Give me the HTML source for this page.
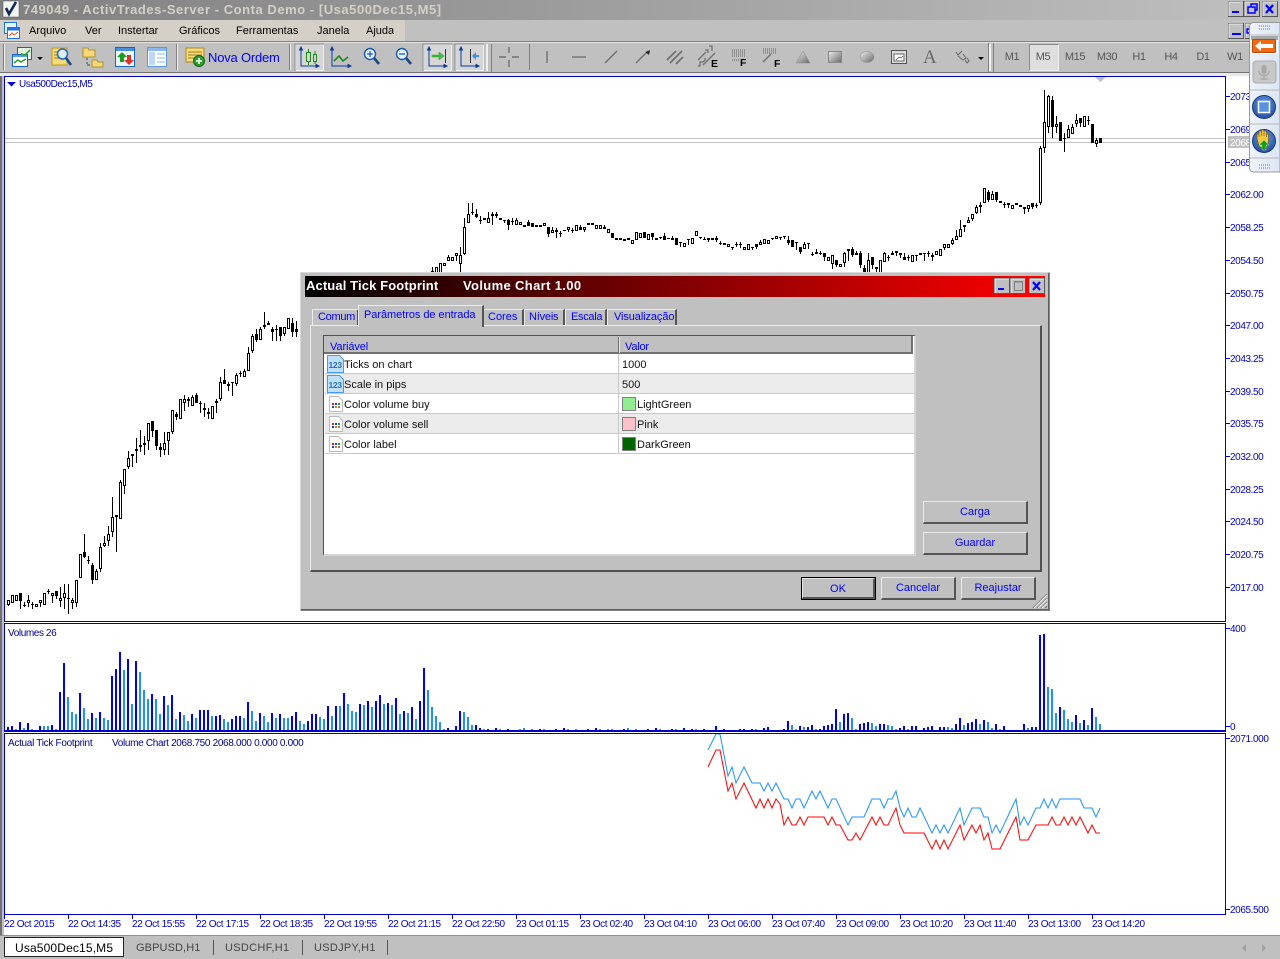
<!DOCTYPE html>
<html lang="pt"><head><meta charset="utf-8"><title>ActivTrades</title>
<style>
html,body{margin:0;padding:0}
body{width:1280px;height:959px;overflow:hidden;position:relative;background:#c0c0c0;font-family:"Liberation Sans",sans-serif;font-size:12px}
.a,.t{position:absolute}
.t{white-space:nowrap;line-height:14px}
.m{color:#000;top:24px;font-size:11px}
.tf{top:50px;color:#555;font-size:11px;letter-spacing:-.4px;width:30px;text-align:center}
.y{left:1230px;margin-top:2px;color:#0000cd;font-size:10px;letter-spacing:-.4px;line-height:12px}
.x{top:919px;color:#0000cd;font-size:10px;letter-spacing:-.38px;line-height:12px}
.c{color:#00008b;font-size:10px;line-height:12px;letter-spacing:-.33px}
.tab{color:#0000ff;font-size:11px}
.tb{position:absolute;top:309px;height:16px;background:#c0c0c0;border-top:1px solid #ececec;border-left:1px solid #ececec;border-right:2px solid #555;box-sizing:border-box}
.btn{position:absolute;box-sizing:border-box;background:#c0c0c0;border-top:1px solid #e8e8e8;border-left:1px solid #e8e8e8;border-right:2px solid #555;border-bottom:2px solid #555;color:#0000ff;text-align:center;font-size:11px;line-height:21px}
.r{position:absolute;left:1px;width:589px;height:20px;box-sizing:border-box;border-bottom:1px solid #c8c8c8}
.n{position:absolute;left:19px;top:4px;color:#111;font-size:11px;line-height:14px;white-space:nowrap}
.v{position:absolute;left:297px;top:4px;color:#111;font-size:11px;line-height:14px;white-space:nowrap}
.s{position:absolute;left:297px;top:3px;width:14px;height:14px;box-sizing:border-box;border:1px solid #808080}
.ic{position:absolute;left:2px;top:1px}
</style></head><body>

<!-- title bar -->
<div class="a" style="left:0;top:0;width:1280px;height:20px;background:linear-gradient(90deg,#808080,#c0c0c0)"></div>
<div class="t" style="left:23px;top:3px;color:#d4d0c8;font-weight:bold;font-size:13px;letter-spacing:.54px">749049 - ActivTrades-Server - Conta Demo - [Usa500Dec15,M5]</div>

<!-- menu -->
<div class="a" style="left:0;top:20px;width:405px;height:21px;background:#d4d0c8"></div>
<div class="a" style="left:0;top:41px;width:1280px;height:1px;background:#808080"></div>
<div class="a" style="left:0;top:42px;width:1280px;height:1px;background:#e4e4e4"></div>
<div class="t m" style="left:29px">Arquivo</div>
<div class="t m" style="left:85px">Ver</div>
<div class="t m" style="left:118px">Instertar</div>
<div class="t m" style="left:179px">Gráficos</div>
<div class="t m" style="left:236px">Ferramentas</div>
<div class="t m" style="left:317px">Janela</div>
<div class="t m" style="left:366px">Ajuda</div>

<!-- toolbar strip -->
<div class="a" style="left:0;top:72px;width:1280px;height:1px;background:#707070"></div>
<div class="a" style="left:0;top:73px;width:1280px;height:3px;background:#e8e8e8"></div>

<div class="t" style="left:208px;top:51px;color:#0000ff;font-size:13px;letter-spacing:-.2px">Nova Ordem</div>
<div class="a" style="left:1029px;top:44px;width:30px;height:27px;box-sizing:border-box;background:#dedede;border:1px solid #f0f0f0;border-top-color:#8a8a8a;border-left-color:#8a8a8a"></div>
<div class="t tf" style="left:997px">M1</div><div class="t tf" style="left:1028px">M5</div><div class="t tf" style="left:1060px">M15</div><div class="t tf" style="left:1092px">M30</div><div class="t tf" style="left:1124px">H1</div><div class="t tf" style="left:1156px">H4</div><div class="t tf" style="left:1188px">D1</div><div class="t tf" style="left:1220px">W1</div>

<!-- chart area -->
<div class="a" style="left:0;top:76px;width:2px;height:860px;background:#707070"></div>
<div class="a" style="left:4px;top:76px;width:1276px;height:859px;background:#fff"></div>
<div class="a" style="left:0;top:935px;width:1280px;height:1px;background:#909090"></div>

<svg id="ch" class="a" style="left:0;top:0" width="1280" height="959" shape-rendering="crispEdges"></svg>

<div class="a" style="left:4px;top:76px;width:1222px;height:546px;box-sizing:border-box;border:1px solid #0000cd;border-right-width:1px"></div>
<div class="a" style="left:4px;top:623px;width:1222px;height:109px;box-sizing:border-box;border:1px solid #0000cd;border-bottom-width:2px"></div>
<div class="a" style="left:4px;top:733px;width:1222px;height:182px;box-sizing:border-box;border:1px solid #0000cd"></div>

<svg class="a" style="left:0;top:0" width="1280" height="959">
 <path d="M7 82h9l-4.500 4.500z" fill="#0000cd"/>
 <path d="M1095 77h11l-5.500 5z" fill="#c0c0c0"/>
 <g fill="#0000cd" shape-rendering="crispEdges">
 <rect x="1226" y="96" width="4" height="1"/><rect x="1226" y="129" width="4" height="1"/><rect x="1226" y="162" width="4" height="1"/><rect x="1226" y="194" width="4" height="1"/><rect x="1226" y="227" width="4" height="1"/><rect x="1226" y="260" width="4" height="1"/><rect x="1226" y="293" width="4" height="1"/><rect x="1226" y="325" width="4" height="1"/><rect x="1226" y="358" width="4" height="1"/><rect x="1226" y="391" width="4" height="1"/><rect x="1226" y="423" width="4" height="1"/><rect x="1226" y="456" width="4" height="1"/><rect x="1226" y="489" width="4" height="1"/><rect x="1226" y="521" width="4" height="1"/><rect x="1226" y="554" width="4" height="1"/><rect x="1226" y="587" width="4" height="1"/>
 <rect x="1226" y="628" width="4" height="1"/><rect x="1226" y="726" width="4" height="1"/><rect x="1226" y="738" width="4" height="1"/><rect x="1226" y="909" width="4" height="1"/>
 <rect x="4" y="915" width="1" height="4"/><rect x="68" y="915" width="1" height="4"/><rect x="132" y="915" width="1" height="4"/><rect x="196" y="915" width="1" height="4"/><rect x="260" y="915" width="1" height="4"/><rect x="324" y="915" width="1" height="4"/><rect x="388" y="915" width="1" height="4"/><rect x="452" y="915" width="1" height="4"/><rect x="516" y="915" width="1" height="4"/><rect x="580" y="915" width="1" height="4"/><rect x="644" y="915" width="1" height="4"/><rect x="708" y="915" width="1" height="4"/><rect x="772" y="915" width="1" height="4"/><rect x="836" y="915" width="1" height="4"/><rect x="900" y="915" width="1" height="4"/><rect x="964" y="915" width="1" height="4"/><rect x="1028" y="915" width="1" height="4"/><rect x="1092" y="915" width="1" height="4"/>
 </g>
</svg>

<div class="t" style="left:19px;top:79px;color:#0000cd;font-size:10px;line-height:12px;letter-spacing:-.48px">Usa500Dec15,M5</div>
<div class="t c" style="left:8px;top:628px;letter-spacing:-.4px">Volumes 26</div>
<div class="t c" style="left:8px;top:738px;letter-spacing:-.3px">Actual Tick Footprint</div>
<div class="t c" style="left:112px;top:738px">Volume Chart 2068.750 2068.000 0.000 0.000</div>

<div class="t y" style="top:90px">2073.25</div><div class="t y" style="top:123px">2069.50</div>
<div class="a" style="left:1228px;top:136px;width:40px;height:12px;background:#c0c0c0"></div>
<div class="t y" style="top:136px;color:#fff">2068.75</div>
<div class="t y" style="top:156px">2065.75</div><div class="t y" style="top:188px">2062.00</div><div class="t y" style="top:221px">2058.25</div><div class="t y" style="top:254px">2054.50</div><div class="t y" style="top:287px">2050.75</div><div class="t y" style="top:319px">2047.00</div><div class="t y" style="top:352px">2043.25</div><div class="t y" style="top:385px">2039.50</div><div class="t y" style="top:417px">2035.75</div><div class="t y" style="top:450px">2032.00</div><div class="t y" style="top:483px">2028.25</div><div class="t y" style="top:515px">2024.50</div><div class="t y" style="top:548px">2020.75</div><div class="t y" style="top:581px">2017.00</div>
<div class="t y" style="top:622px">400</div><div class="t y" style="top:720px">0</div><div class="t y" style="top:732px">2071.000</div><div class="t y" style="top:903px">2065.500</div>

<div class="t x" style="left:4px">22 Oct 2015</div><div class="t x" style="left:68px">22 Oct 14:35</div><div class="t x" style="left:132px">22 Oct 15:55</div><div class="t x" style="left:196px">22 Oct 17:15</div><div class="t x" style="left:260px">22 Oct 18:35</div><div class="t x" style="left:324px">22 Oct 19:55</div><div class="t x" style="left:388px">22 Oct 21:15</div><div class="t x" style="left:452px">22 Oct 22:50</div><div class="t x" style="left:516px">23 Oct 01:15</div><div class="t x" style="left:580px">23 Oct 02:40</div><div class="t x" style="left:644px">23 Oct 04:10</div><div class="t x" style="left:708px">23 Oct 06:00</div><div class="t x" style="left:772px">23 Oct 07:40</div><div class="t x" style="left:836px">23 Oct 09:00</div><div class="t x" style="left:900px">23 Oct 10:20</div><div class="t x" style="left:964px">23 Oct 11:40</div><div class="t x" style="left:1028px">23 Oct 13:00</div><div class="t x" style="left:1092px">23 Oct 14:20</div>

<!-- tab bar -->
<div class="a" style="left:4px;top:937px;width:120px;height:20px;box-sizing:border-box;background:#fff;border:1px solid #222"></div>
<div class="t" style="left:15px;top:941px;color:#000;font-size:12px;letter-spacing:.15px">Usa500Dec15,M5</div>
<div class="t" style="left:136px;top:941px;color:#444;font-size:11px;letter-spacing:.1px">GBPUSD,H1</div>
<div class="t" style="left:225px;top:941px;color:#444;font-size:11px;letter-spacing:.3px">USDCHF,H1</div>
<div class="t" style="left:314px;top:941px;color:#444;font-size:11px;letter-spacing:.3px">USDJPY,H1</div>
<div class="a" style="left:213px;top:940px;width:1px;height:15px;background:#555"></div>
<div class="a" style="left:302px;top:940px;width:1px;height:15px;background:#555"></div>
<div class="a" style="left:387px;top:940px;width:1px;height:15px;background:#555"></div>

<!-- toolbar icons -->
<svg class="a" style="left:0;top:0" width="1280" height="80">
 <!-- logo + menu icon -->
 <rect x="3" y="1" width="16" height="16" fill="#f4f4f4" stroke="#555" stroke-width=".5"/>
 <path d="M6 8l3 6 7-12" fill="none" stroke="#0d2a55" stroke-width="2.600"/>
 <rect x="4.500" y="22.500" width="12" height="11" fill="#e8f2ff" stroke="#1e74d8"/>
 <rect x="7.500" y="27.500" width="12" height="11" fill="#fff" stroke="#1e74d8"/>
 <rect x="8" y="28" width="11" height="2.500" fill="#1e74d8"/>
 <path d="M9 36l3-3 2 2 4-3" fill="none" stroke="#e05020"/>
 <!-- separators -->
 <g fill="#808080"><rect x="3" y="44" width="1" height="26"/><rect x="176" y="44" width="1" height="26"/><rect x="289" y="44" width="1" height="26"/><rect x="529" y="44" width="1" height="26"/></g>
 <g fill="#f0f0f0"><rect x="4" y="44" width="1" height="26"/><rect x="177" y="44" width="1" height="26"/><rect x="290" y="44" width="1" height="26"/><rect x="486" y="44" width="2" height="27"/><rect x="989" y="44" width="2" height="27"/></g>
 <g fill="#808080"><rect x="491" y="44" width="1" height="28"/><rect x="988" y="43" width="1" height="29"/><rect x="993" y="43" width="1" height="29"/></g>
 <!-- new chart -->
 <rect x="17.500" y="47.500" width="14" height="12" fill="#e4f2e4" stroke="#1565c0"/>
 <rect x="12.500" y="54.500" width="15" height="12" fill="#fff" stroke="#1565c0"/>
 <rect x="13" y="55" width="14" height="2" fill="#5aa0e0"/>
 <path d="M14 63l4-3 3 2 5-3M21 54l4 1 5-5" fill="none" stroke="#2a9a2a" stroke-width="1.500"/>
 <path d="M37 57h6l-3 3z" fill="#000"/>
 <!-- find -->
 <rect x="52" y="48" width="15" height="17" fill="#f6dc78" stroke="#c09820"/>
 <path d="M54 52h10M54 55h6M54 58h6" stroke="#a08020"/>
 <circle cx="62.500" cy="54" r="5" fill="#dcecff" stroke="#2a6ab8" stroke-width="1.600"/>
 <path d="M66 58l5 7" stroke="#1a4a90" stroke-width="2.600"/>
 <!-- folders -->
 <path d="M83 48h5l1 2h6v7H83z" fill="#f5d878" stroke="#b09030"/>
 <path d="M92 60h5l1 2h5v5H92z" fill="#f5d878" stroke="#b09030"/>
 <path d="M87 58v2M87 62v2M87 65h3" stroke="#444" fill="none"/>
 <!-- market -->
 <rect x="115.500" y="47.500" width="19" height="19" fill="#eef6ff" stroke="#1565c0"/>
 <rect x="116" y="48" width="18" height="3" fill="#4a90d8"/>
 <path d="M122 52l-5 5h3v5h4v-5h3z" fill="#18a018"/>
 <path d="M129 65l5-5h-3v-5h-4v5h-3z" fill="#e03020"/>
 <!-- layout -->
 <rect x="147.500" y="47.500" width="19" height="19" fill="#fff" stroke="#5a98d8"/>
 <rect x="148" y="48" width="18" height="3" fill="#8ab8e8"/>
 <rect x="149" y="52" width="6" height="13" fill="#bcd8f4"/>
 <path d="M157 54h8M157 58h8M157 62h8" stroke="#90b8e0"/>
 <!-- nova ordem -->
 <rect x="186" y="48" width="18" height="14" fill="#f6dc78" stroke="#a88820"/>
 <path d="M188 52h14M188 55h14M188 58h10" stroke="#a08020"/>
 <circle cx="199" cy="61" r="5.500" fill="#2aa02a" stroke="#186018"/>
 <path d="M196 61h6M199 58v6" stroke="#fff" stroke-width="1.600"/>
 <!-- pressed btns -->
 <rect x="295.500" y="44.500" width="28" height="26" fill="#d6d6d6" stroke="#f0f0f0"/>
 <path d="M295 71V44h29" fill="none" stroke="#8a8a8a"/>
 <rect x="423.500" y="44.500" width="28" height="26" fill="#d6d6d6" stroke="#f0f0f0"/>
 <path d="M423 71V44h29" fill="none" stroke="#8a8a8a"/>
 <rect x="455.500" y="44.500" width="28" height="26" fill="#d6d6d6" stroke="#f0f0f0"/>
 <path d="M455 71V44h29" fill="none" stroke="#8a8a8a"/>
 <!-- axes -->
 <g fill="none" stroke="#0a3aa0">
  <path d="M301 48v18h17"/><path d="M299.500 50l1.500-3 1.500 3zM316 64.500l3 1.500-3 1.500z" fill="#0a3aa0"/>
  <path d="M332 48v18h18"/><path d="M330.500 50l1.500-3 1.500 3zM348 64.500l3 1.500-3 1.500z" fill="#0a3aa0"/>
  <path d="M429 48v18h18"/><path d="M427.500 50l1.500-3 1.500 3zM444 64.500l3 1.500-3 1.500z" fill="#0a3aa0"/>
  <path d="M461 48v18h18"/><path d="M459.500 50l1.500-3 1.500 3zM476 64.500l3 1.500-3 1.500z" fill="#0a3aa0"/>
 </g>
 <rect x="306.500" y="52.500" width="4" height="9" fill="#d6d6d6" stroke="#1a8a1a"/><path d="M308.500 49v3M308.500 62v3" stroke="#1a8a1a"/>
 <rect x="313.500" y="54.500" width="3" height="7" fill="#d6d6d6" stroke="#1a8a1a"/><path d="M315 51v3M315 62v2" stroke="#1a8a1a"/>
 <path d="M334 61l5-5 4 5 5-4" fill="none" stroke="#1a8a1a" stroke-width="1.600"/>
 <path d="M432 55h7v-3l5 4-5 4v-3h-7z" fill="#40c040" stroke="#2a9a2a" stroke-width=".5"/><path d="M445.500 49v14" stroke="#333"/>
 <path d="M470.500 49v14" stroke="#333"/><path d="M479 55h-3v-3l-4 4 4 4v-3h3z" fill="#4a8ae8"/>
 <!-- zoom in/out -->
 <circle cx="370" cy="54" r="5.500" fill="#e8f2ff" stroke="#1a5ab0" stroke-width="1.400"/><path d="M367 54h6M370 51v6" stroke="#1a5ab0" stroke-width="1.300"/><path d="M374 58l5 6" stroke="#1a4a80" stroke-width="2.600"/>
 <circle cx="402" cy="54" r="5.500" fill="#e8f2ff" stroke="#1a5ab0" stroke-width="1.400"/><path d="M399 54h6" stroke="#1a5ab0" stroke-width="1.300"/><path d="M406 58l5 6" stroke="#1a4a80" stroke-width="2.600"/>
 <!-- drawing tools -->
 <g fill="none" stroke="#707070" stroke-width="1.400">
  <path d="M499 57h7M512 57h7M509 47v6M509 60v7"/>
  <path d="M547 51v12"/><path d="M572 57h14"/>
  <path d="M605 63l12-12"/>
  <path d="M636 63l12-12"/>
  <path d="M667 60l9-9M670 63l12-12M676 64l7-7" stroke-width="1.800"/>
  <path d="M698 66h2v-4h3l2-2v-2M705 50h3v3M709 46h3v5M698 60l8-8M703 65l12-12" stroke-width="1.300"/>
  <path d="M763 62l8-8" />
 </g>
 <path d="M646 52l4-2-1 5-1-1-2-1z" fill="#222"/>
 <path d="M732 50h14M732 52h14M732 54h14M732 56h14M732 60h8" stroke="#606060" stroke-dasharray="1 1"/>
 <path d="M763 49h13M763 51h13M763 53h13" stroke="#606060" stroke-dasharray="1 1"/>
 <text x="711" y="67" font-family="Liberation Sans,sans-serif" font-weight="bold" font-size="10.500" fill="#000">E</text>
 <text x="740" y="66" font-family="Liberation Sans,sans-serif" font-weight="bold" font-size="10.500" fill="#000">F</text>
 <text x="774" y="67" font-family="Liberation Sans,sans-serif" font-weight="bold" font-size="10.500" fill="#000">F</text>
 <defs>
  <linearGradient id="gg" x1="0" y1="0" x2="1" y2="1"><stop offset="0" stop-color="#ececec"/><stop offset="1" stop-color="#6a6a6a"/></linearGradient>
 </defs>
 <path d="M803 51l7 12h-14z" fill="url(#gg)" stroke="#888" stroke-width=".5"/>
 <rect x="828.500" y="51.500" width="13" height="11" fill="url(#gg)" stroke="#888"/>
 <ellipse cx="867" cy="57" rx="7" ry="5.500" fill="url(#gg)" stroke="#888" stroke-width=".5"/>
 <rect x="891.500" y="50.500" width="15" height="13" fill="#ddd" stroke="#555"/><rect x="894" y="54" width="10" height="7" fill="#fff" stroke="#666"/><path d="M896 60l3-3 2 1 2-2" fill="none" stroke="#444" stroke-width=".7"/>
 <text x="923" y="63" font-family="Liberation Serif,serif" font-size="19" fill="#666">A</text>
 <path d="M956 52l2 3 4-4M958 56l5 4 3-2-3-4M965 60l2 3 2-2-2-3" fill="none" stroke="#666"/>
 <path d="M978 57h6l-3 3z" fill="#000"/>
 <!-- window buttons -->
 <g fill="#c0c0c0" stroke="#555"><rect x="1228.500" y="1.500" width="15" height="15"/><rect x="1244.500" y="1.500" width="15" height="15"/><rect x="1262.500" y="1.500" width="15" height="15"/><rect x="1228.500" y="23.500" width="15" height="15"/><rect x="1245.500" y="23.500" width="15" height="15"/></g>
 <g stroke="#eee" fill="none"><path d="M1229 16V2h14M1245 16V2h14M1263 16V2h14M1229 38V24h14M1246 38V24h14"/></g>
 <g fill="#0000ff"><rect x="1232" y="11" width="7" height="2"/><rect x="1232" y="33" width="9" height="2"/></g>
 <path d="M1251 7V4h6v6h-2M1248 7h7v6h-7z" fill="none" stroke="#0000ff" stroke-width="1.500"/>
 <path d="M1266 5l7 8M1273 5l-7 8" stroke="#0000ff" stroke-width="2.200"/>
 <path d="M1247 29h3v4h-3z" fill="none" stroke="#0000ff" stroke-width="1.500"/>
</svg>

<!-- dialog -->
<div class="a" style="left:300px;top:272px;width:750px;height:339px;box-sizing:border-box;background:#c0c0c0;border:1px solid #808080;border-top-color:#d8d8d8;border-left-color:#d8d8d8;box-shadow:inset -1px -1px 0 #606060">
 <div class="a" style="left:4px;top:3px;width:740px;height:21px;background:linear-gradient(90deg,#000,#ff0000)"></div>
</div>
<div class="t" style="left:306px;top:279px;color:#fff;font-weight:bold;font-size:13px;letter-spacing:.12px">Actual Tick Footprint</div>
<div class="t" style="left:463px;top:279px;color:#fff;font-weight:bold;font-size:13px;letter-spacing:.35px">Volume Chart 1.00</div>
<svg class="a" style="left:990px;top:276px" width="60" height="21">
 <g fill="#c0c0c0" stroke="#555"><rect x="4.500" y="2.500" width="15" height="15"/><rect x="20.500" y="2.500" width="15" height="15"/><rect x="39.500" y="2.500" width="15" height="15"/></g>
 <path d="M5 17V3h14M21 17V3h14M40 17V3h14" fill="none" stroke="#eee"/>
 <rect x="8" y="12" width="6" height="2" fill="#0000ff"/>
 <rect x="24.500" y="5.500" width="8" height="9" fill="none" stroke="#808080"/><path d="M24 6h9" stroke="#808080"/>
 <path d="M43 6l7 8M50 6l-7 8" stroke="#0000ff" stroke-width="2.200"/>
</svg>

<!-- panel -->
<div class="a" style="left:310px;top:325px;width:732px;height:247px;box-sizing:border-box;border-top:1px solid #ececec;border-left:1px solid #ececec;border-right:2px solid #505050;border-bottom:2px solid #505050"></div>
<!-- tabs -->
<div class="tb" style="left:312px;width:47px"></div>
<div class="tb" style="left:483px;width:41px"></div>
<div class="tb" style="left:524px;width:41px"></div>
<div class="tb" style="left:565px;width:42px"></div>
<div class="tb" style="left:607px;width:70px"></div>
<div class="tb" style="left:358px;top:305px;width:126px;height:22px;border-bottom:0"></div>
<div class="t tab" style="left:318px;top:310px;letter-spacing:-.3px">Comum</div>
<div class="t tab" style="left:364px;top:308px;letter-spacing:-.05px">Parâmetros de entrada</div>
<div class="t tab" style="left:488px;top:310px">Cores</div>
<div class="t tab" style="left:529px;top:310px;letter-spacing:-.2px">Níveis</div>
<div class="t tab" style="left:571px;top:310px;letter-spacing:-.3px">Escala</div>
<div class="t tab" style="left:614px;top:310px;letter-spacing:-.1px">Visualização</div>

<!-- list -->
<div class="a" style="left:323px;top:335px;width:593px;height:221px;box-sizing:border-box;background:#fff;border-top:1px solid #505050;border-left:1px solid #505050;border-right:2px solid #d4d4d4;border-bottom:2px solid #d4d4d4;overflow:hidden">
 <div class="a" style="left:1px;top:1px;width:590px;height:218px">
 <div class="a" style="left:-1px;top:-1px;width:589px;height:18px;box-sizing:border-box;background:#c0c0c0;border-right:2px solid #707070;border-bottom:2px solid #707070"></div>
 <div class="a" style="left:293px;top:0;width:2px;height:16px;background:linear-gradient(90deg,#707070 50%,#e8e8e8 50%)"></div>
 <div class="t tab" style="left:5px;top:3px;letter-spacing:-.1px">Variável</div>
 <div class="t tab" style="left:300px;top:3px;letter-spacing:-.2px">Valor</div>

 <div class="r" style="top:17px;left:0"><svg class="ic" width="17" height="19"><path d="M.5.500h12l4 4v13H.5z" fill="#bfe0fb" stroke="#4a9ae0"/><text x="1.500" y="13" font-family="Liberation Sans,sans-serif" font-size="8.500" font-weight="bold" fill="#2a70c0" letter-spacing="-.3">123</text></svg><div class="n">Ticks on chart</div><div class="v">1000</div></div>
 <div class="r" style="top:37px;left:0;background:#ebebeb"><svg class="ic" width="17" height="19"><path d="M.5.500h12l4 4v13H.5z" fill="#bfe0fb" stroke="#4a9ae0"/><text x="1.500" y="13" font-family="Liberation Sans,sans-serif" font-size="8.500" font-weight="bold" fill="#2a70c0" letter-spacing="-.3">123</text></svg><div class="n">Scale in pips</div><div class="v">500</div></div>
 <div class="r" style="top:57px;left:0"><svg class="ic" width="17" height="19"><path d="M2.500 1.500h9l4 4v11h-13z" fill="#fff" stroke="#bbb"/><path d="M5 8h2v2H5z" fill="#d02020"/><path d="M8 8h2v2H8z" fill="#2040d0"/><path d="M11 8h2v2h-2z" fill="#20a020"/><path d="M5 11h2v2H5z" fill="#2040d0"/><path d="M8 11h2v2H8z" fill="#e08020"/><path d="M11 11h2v2h-2z" fill="#808080"/></svg><div class="n">Color volume buy</div><div class="s" style="background:#90ee90"></div><div class="v" style="left:312px">LightGreen</div></div>
 <div class="r" style="top:77px;left:0;background:#ebebeb"><svg class="ic" width="17" height="19"><path d="M2.500 1.500h9l4 4v11h-13z" fill="#fff" stroke="#bbb"/><path d="M5 8h2v2H5z" fill="#d02020"/><path d="M8 8h2v2H8z" fill="#2040d0"/><path d="M11 8h2v2h-2z" fill="#20a020"/><path d="M5 11h2v2H5z" fill="#2040d0"/><path d="M8 11h2v2H8z" fill="#e08020"/><path d="M11 11h2v2h-2z" fill="#808080"/></svg><div class="n">Color volume sell</div><div class="s" style="background:#ffc0cb"></div><div class="v" style="left:312px">Pink</div></div>
 <div class="r" style="top:97px;left:0"><svg class="ic" width="17" height="19"><path d="M2.500 1.500h9l4 4v11h-13z" fill="#fff" stroke="#bbb"/><path d="M5 8h2v2H5z" fill="#d02020"/><path d="M8 8h2v2H8z" fill="#2040d0"/><path d="M11 8h2v2h-2z" fill="#20a020"/><path d="M5 11h2v2H5z" fill="#2040d0"/><path d="M8 11h2v2H8z" fill="#e08020"/><path d="M11 11h2v2h-2z" fill="#808080"/></svg><div class="n">Color label</div><div class="s" style="background:#006400"></div><div class="v" style="left:312px">DarkGreen</div></div>
 <div class="a" style="left:293px;top:17px;width:1px;height:100px;background:#c8c8c8"></div>
 </div>
</div>

<div class="btn" style="left:923px;top:501px;width:105px;height:23px">Carga</div>
<div class="btn" style="left:923px;top:532px;width:105px;height:23px">Guardar</div>
<div class="a" style="left:801px;top:577px;width:75px;height:23px;box-sizing:border-box;border:1px solid #000"></div>
<div class="btn" style="left:802px;top:578px;width:73px;height:21px;line-height:20px">OK</div>
<div class="btn" style="left:881px;top:577px;width:75px;height:23px">Cancelar</div>
<div class="btn" style="left:961px;top:577px;width:75px;height:23px">Reajustar</div>
<svg class="a" style="left:1032px;top:593px" width="16" height="16"><path d="M1 15L15 1M5 15L15 5M9 15l6-6M13 15l2-2" stroke="#707070" fill="none"/><path d="M2 15L15 2M6 15l9-9M10 15l5-5" stroke="#f0f0f0" fill="none"/></svg>

<!-- side toolbar -->
<svg class="a" style="left:1249px;top:22px" width="31" height="151">
 <defs>
  <linearGradient id="sb" x1="0" y1="0" x2="1" y2="0"><stop offset="0" stop-color="#eef3fb"/><stop offset="1" stop-color="#dbe5f3"/></linearGradient>
  <radialGradient id="bl" cx=".5" cy=".35" r=".7"><stop offset="0" stop-color="#6a9ae0"/><stop offset="1" stop-color="#1f4a9a"/></radialGradient>
 </defs>
 <path d="M4.500.5h26.500v149.500H4.500a4 4 0 0 1-4-4V4.500a4 4 0 0 1 4-4z" fill="url(#sb)" stroke="#9a9a9a"/>
 <path d="M10 4h1M12 4h1M14 4h1M16 4h1M18 4h1M20 4h1M10 7h1M12 7h1M14 7h1M16 7h1M18 7h1M20 7h1" stroke="#777" stroke-width="1"/>
 <path d="M10 143h1M12 143h1M14 143h1M16 143h1M18 143h1M20 143h1M10 146h1M12 146h1M14 146h1M16 146h1M18 146h1M20 146h1" stroke="#777"/>
 <path d="M1 13h30M1 68h30M1 102h30M1 136h30" stroke="#b8b8b8"/>
 <rect x="2" y="14" width="27" height="18" fill="#fff" /><rect x="2" y="14" width="27" height="4" fill="#a8a8a8"/>
 <rect x="3.500" y="17.500" width="23" height="13" rx="1" fill="#ef6a12" stroke="#b84a08"/>
 <path d="M6 24l6-5v3h12v4H12v3z" fill="#fff"/>
 <rect x="4" y="39" width="23" height="22" rx="3" fill="#c8c8c8" stroke="#aaa"/>
 <rect x="12.500" y="43" width="5" height="9" rx="2.500" fill="#a8a8a8"/><path d="M10 49c0 6 10 6 10 0M15 54v3M11 57h8" stroke="#a8a8a8" fill="none" stroke-width="1.300"/>
 <circle cx="15" cy="85" r="11.500" fill="url(#bl)" stroke="#1a3a80"/>
 <rect x="9.500" y="79.500" width="11" height="11" fill="#5a90e0" stroke="#fff" stroke-width="1.500"/>
 <circle cx="15" cy="119" r="11.500" fill="url(#bl)" stroke="#1a3a80"/>
 <path d="M8 117v-5h2v3-6h2.500v5-6h2.500v6-5h2.500v6-3h2v8l-2 5h-7z" fill="#f0c840" stroke="#6a4a10" stroke-width=".6"/>
 <path d="M15 118l5 5h-3v5h-4v-5h-3z" fill="#12a012" stroke="#fff" stroke-width=".3"/>
</svg>
<svg class="a" style="left:1238px;top:942px" width="36" height="12"><path d="M8 2l-4 4 4 4z" fill="#a0a0a0"/><path d="M24 2l4 4-4 4z" fill="#a0a0a0"/></svg>

<script>
(function(){
var D="8 600 605 0 606 0;12 595 603 0 0 0;16 595 601 0 0 0;20 593 601 0 609 1;24 605 605 602 607 0;28 600 603 595 607 0;32 604 604 602 609 0;36 604 607 0 0 0;40 600 603 0 607 0;44 593 605 0 0 0;48 591 591 589 594 0;52 593 596 0 603 0;56 591 596 0 599 1;60 598 601 587 607 0;64 593 598 584 609 0;68 598 598 584 614 0;72 600 603 598 609 0;76 580 603 0 607 0;80 554 578 0 0 0;84 552 557 534 558 1;88 560 560 556 564 0;92 565 580 563 584 1;96 571 580 569 0 0;100 547 569 543 572 0;104 543 546 536 547 0;108 534 541 526 546 0;112 517 532 497 537 0;116 515 517 0 552 1;120 482 519 480 0 0;124 469 486 0 494 0;128 458 467 451 469 0;132 454 456 0 467 0;136 449 451 438 463 0;140 445 447 430 452 0;144 443 445 436 455 0;148 423 441 0 450 0;152 421 431 0 437 1;156 430 446 0 450 1;160 447 450 443 457 1;164 443 450 432 455 0;168 432 441 0 455 0;172 410 432 0 434 0;176 414 417 412 420 1;180 399 419 0 0 0;184 399 403 395 411 0;188 399 401 397 407 1;192 397 406 395 0 0;196 395 403 393 0 1;200 403 403 401 413 0;204 408 410 403 417 1;208 412 414 408 419 1;212 406 419 0 0 0;216 401 403 399 413 0;220 382 399 377 401 0;224 380 384 369 0 1;228 384 386 382 391 0;232 382 382 0 396 0;236 375 384 373 386 0;240 373 373 371 377 0;244 371 377 369 0 0;248 353 371 347 0 0;252 336 351 334 353 0;256 334 340 329 342 1;260 329 340 327 0 0;264 325 327 312 329 0;268 323 325 321 0 1;272 329 332 327 341 1;276 329 329 325 341 0;280 327 336 0 341 1;284 327 334 0 336 0;288 318 329 0 0 0;292 323 332 318 337 1;296 329 332 321 337 1;"+
"432 271 271 267 272 0;436 267 273 0 0 0;440 263 273 0 0 0;444 263 266 0 0 0;448 257 261 255 0 0;452 257 261 0 0 0;456 253 256 0 261 0;460 255 264 247 273 0;464 227 254 218 255 0;468 214 223 203 0 0;472 212 212 203 215 0;476 214 217 209 218 1;480 220 220 216 224 0;484 218 220 0 0 1;488 218 223 212 0 0;492 214 216 212 225 0;496 214 216 212 218 1;500 218 220 0 0 0;504 220 220 0 223 0;508 220 225 219 230 1;512 221 221 218 225 0;516 220 225 218 0 0;520 222 225 0 0 0;524 225 227 0 0 0;528 222 226 220 0 1;532 223 227 0 0 1;536 225 227 0 0 0;540 225 227 0 0 0;544 223 226 0 0 0;548 227 234 0 237 1;552 230 233 227 0 0;556 230 232 228 238 1;560 233 233 231 237 0;564 230 230 0 0 0;568 227 230 0 232 0;572 230 230 228 233 0;576 225 231 0 0 0;580 227 230 225 0 1;584 227 230 0 232 0;588 223 225 0 0 0;592 223 225 0 0 0;596 225 229 0 0 0;600 225 229 0 0 0;604 227 229 225 0 1;608 229 233 0 0 0;612 233 238 0 0 1;616 238 240 0 0 0;620 238 240 0 0 0;624 239 241 0 0 0;628 238 240 0 0 1;632 240 244 0 0 0;636 232 240 0 0 0;640 233 238 0 0 0;644 232 238 0 0 1;648 234 240 0 0 0;652 233 237 0 240 1;656 238 240 0 0 0;660 237 237 0 239 0;664 236 240 233 0 1;668 238 238 0 0 0;672 238 240 236 0 1;676 238 245 0 0 1;680 242 242 0 247 0;684 243 247 0 0 0;688 239 239 0 245 0;692 238 244 0 0 0;696 231 236 0 0 0;700 237 237 0 239 0;704 239 239 237 0 0;708 238 240 0 242 1;712 238 240 0 0 1;716 238 240 236 242 1;720 243 243 241 245 0;724 243 245 0 0 0;728 244 247 0 0 0;732 247 247 0 250 0;736 244 244 242 247 0;740 244 244 242 248 0;744 247 250 0 0 0;748 244 250 0 0 0;752 247 247 0 250 0;756 244 247 0 249 1;760 242 245 240 0 0;764 239 244 0 0 0;768 240 244 0 0 0;772 238 238 0 240 0;776 236 239 0 0 0;780 237 237 0 240 0;784 236 236 0 239 0;788 240 243 236 245 1;792 240 247 0 0 1;796 242 242 0 250 0;800 247 252 0 254 1;804 244 249 242 0 0;808 243 243 0 249 0;812 254 254 252 256 0;816 252 254 249 0 0;820 253 253 251 255 0;824 253 257 0 261 1;828 257 261 0 0 0;832 255 264 0 269 0;836 260 265 0 267 1;840 264 267 0 0 0;844 253 263 252 267 0;848 249 251 0 261 0;852 249 255 247 257 1;856 253 255 251 0 1;860 253 265 251 268 1;864 268 273 265 0 1;868 260 273 253 0 0;872 257 265 0 269 1;876 267 269 0 272 0;880 260 273 0 0 0;884 253 262 252 0 0;888 257 257 255 261 0;892 253 255 251 0 0;896 251 253 0 256 0;900 253 255 0 258 0;904 257 260 253 0 1;908 257 257 255 261 0;912 255 262 0 0 0;916 255 255 0 261 0;920 253 255 0 0 1;924 253 253 0 261 0;928 253 253 251 257 0;932 255 257 253 261 1;936 251 255 0 0 0;940 249 256 0 0 0;944 244 248 0 250 0;948 244 248 0 0 0;952 240 244 238 245 0;956 236 240 230 0 0;960 229 237 220 0 0;964 225 227 0 232 0;968 220 223 217 0 0;972 214 219 0 221 0;976 207 213 205 214 0;980 205 207 202 213 0;984 188 203 0 0 0;988 192 200 190 202 1;992 194 200 191 0 0;996 192 200 0 202 1;1000 201 203 0 0 0;1004 204 204 202 208 0;1008 203 205 0 208 1;1012 205 209 0 0 0;1016 203 205 0 0 0;1020 205 207 0 0 0;1024 207 209 0 214 0;1028 205 209 0 212 0;1032 203 207 0 209 1;1036 205 205 203 208 0;1040 148 203 146 205 0;1044 122 148 90 153 0;1048 96 127 95 133 0;1052 100 127 96 138 1;1056 124 127 116 133 0;1060 122 141 0 0 1;1064 138 138 133 152 0;1068 129 138 125 0 0;1072 127 134 124 0 0;1076 120 124 114 127 0;1080 118 123 0 127 1;1084 116 127 0 0 0;1088 120 120 116 125 0;1092 124 143 0 0 1;1096 140 144 138 147 0;1100 138 143 0 0 1";
var V="4b5b2d9b3d8b2d1d5b5d5d6b2d39b68b34d19d17d38b23d12d18b13d19b13d11d55b62b79b61d72b27d70b59d41d32d37b32d17d35b26d36b12d19b16d10d17b13d21b21b21b15d15b16b12d9d12b15b15b13d29b20d10d18b15d9d18b13d17b13d13d15b19b10d7d10b17b17b14d12d25b15d25b25d38b27d20d19d27b26d30b24d30b36b27d28b26d33b17d20b18d24b12d30b63b41d24d15d9d2d3b1d5b20b19d14d6d6b".match(/\d+[bd]/g);
var V2="3b2d2b1d3b2d1d2b1d1b2d3d1b2d1d2b2d1b1d2b1d3b2d1b2d1b1d2b1d3b2d1b2d2d1b1d2b3d1b2d1b1d2b1d3b2d1b1d2b2d1b3b".match(/\d+[bd]/g);
var V3="2b2d1d2b1d1d5b1d2b1d1d1b2b2b1d2b2d1d3b4b0d1b0d2b10b6d2d5b4d4b6b2d2b5b6b7b22b9d17b18b13d2d7b8b9b8d5d7b7b6d5d2d3b5b2d5b5b1d3b4b5b1d4b4b4d3d7b13b6d8b9b12b7d11b9d3d7b2d5b1d1d1b0d7b3d4b4b96b97b44d42d18d24b21d12d9d16b8d11b6d23b14d7d".match(/\d+[bd]/g);
var s='',i,p;
s+='<path d="M5 138.500H1225M5 142.500H1225" stroke="#c4c4c4" fill="none"/>';
D.split(';').forEach(function(r){var a=r.split(' ').map(Number),x=a[0],t=a[1],b=a[2],h=a[3]||t,l=a[4]||b,f=a[5];
 s+='<rect x="'+x+'" y="'+h+'" width="1" height="'+Math.max(l-h,1)+'"/>';
 if(t==b){s+='<rect x="'+(x-1)+'" y="'+t+'" width="3" height="1"/>';}
 else{s+='<rect x="'+(x-1)+'" y="'+t+'" width="3" height="'+(b-t)+'"/>';
  if(!f&&b-t>2)s+='<rect x="'+x+'" y="'+(t+1)+'" width="1" height="'+(b-t-2)+'" fill="#fff"/>';}
});
function bars(arr,x0){arr.forEach(function(v,k){var h=parseInt(v),c=v.slice(-1)=='b'?'#0000ff':'#1e90ff';if(h)s+='<rect x="'+(x0+4*k-1)+'" y="'+(731-h)+'" width="2" height="'+h+'" fill="'+c+'"/>';});}
bars(V,8);bars(V2,8+4*V.length);bars(V3,692);
var B="708,750 716,734 720,734 728,776 732,767 736,783 744,767 752,783 760,783 764,791 768,783 772,791 776,783 784,799 788,799 792,808 796,799 800,799 804,808 812,791 816,799 820,791 828,808 832,799 836,799 848,825 852,817 864,817 872,799 880,799 884,808 888,799 892,799 896,791 900,808 904,817 908,808 912,817 916,817 920,808 932,833 936,825 940,833 944,825 948,833 960,808 964,825 972,808 980,808 984,817 988,817 992,833 996,825 1000,833 1016,799 1020,825 1024,817 1028,825 1036,808 1040,808 1044,799 1048,808 1052,799 1056,808 1060,799 1080,799 1084,808 1092,808 1096,817 1100,808";
var R="708,767 716,750 720,750 728,791 732,783 736,799 744,783 756,808 760,799 764,808 768,799 772,808 776,799 780,804 784,825 788,817 792,825 796,825 800,817 804,825 808,817 824,817 828,825 832,817 836,825 840,825 848,840 852,840 856,833 860,840 872,817 876,825 880,817 884,825 888,825 896,808 900,825 904,833 924,833 932,849 936,840 940,849 944,840 948,849 960,825 964,840 972,825 976,833 980,825 984,840 988,833 992,849 1000,849 1016,817 1020,840 1028,840 1036,825 1048,825 1052,817 1056,825 1060,825 1064,817 1068,825 1072,817 1076,825 1080,817 1088,833 1092,825 1096,833 1100,833";
var svg=document.getElementById('ch');
svg.innerHTML='<g fill="#000">'+s+'</g>'+
'<polyline points="'+B+'" fill="none" stroke="#1e90ff" shape-rendering="auto"/>'+
'<polyline points="'+R+'" fill="none" stroke="#ff0000" shape-rendering="auto"/>';
})();
</script>
</body></html>
